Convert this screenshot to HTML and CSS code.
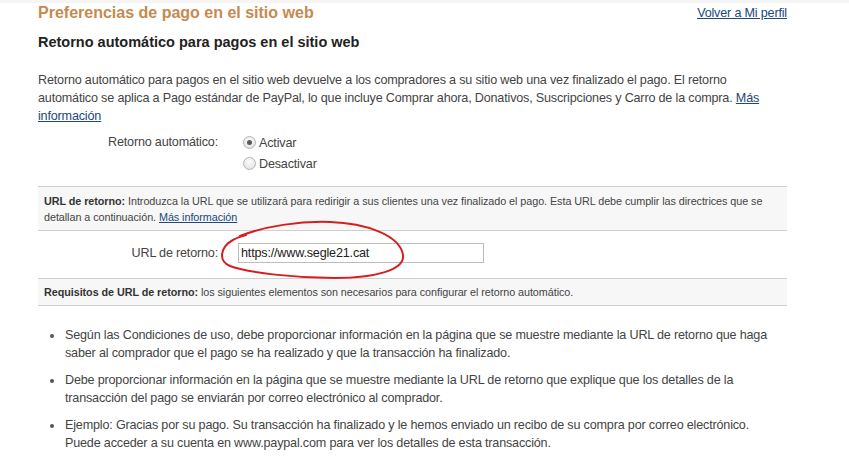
FILE: index.html
```html
<!DOCTYPE html>
<html lang="es">
<head>
<meta charset="utf-8">
<title>Preferencias de pago en el sitio web</title>
<link rel="stylesheet" href="styles.css">
</head>
<body>
<div class="page">
  <header class="top">
    <h1 class="title">Preferencias de pago en el sitio web</h1>
    <a class="link" href="#">Volver a Mi perfil</a>
  </header>
  <h2 class="subtitle">Retorno automático para pagos en el sitio web</h2>
  <p class="intro">Retorno automático para pagos en el sitio web devuelve a los compradores a su sitio web una vez finalizado el pago. El retorno automático se aplica a Pago estándar de PayPal, lo que incluye Comprar ahora, Donativos, Suscripciones y Carro de la compra. <a class="link" href="#">Más información</a></p>

  <div class="row radio-row">
    <div class="label">Retorno automático:</div>
    <div class="opts">
      <div class="opt"><span class="radio on"></span>Activar</div>
      <div class="opt"><span class="radio"></span>Desactivar</div>
    </div>
  </div>

  <div class="note"><b>URL de retorno:</b> Introduzca la URL que se utilizará para redirigir a sus clientes una vez finalizado el pago. Esta URL debe cumplir las directrices que se detallan a continuación. <a class="link" href="#">Más información</a></div>

  <div class="row url-row">
    <div class="label">URL de retorno:</div>
    <div class="input">https://www.segle21.cat</div>
  </div>

  <div class="note note-single"><b>Requisitos de URL de retorno:</b> los siguientes elementos son necesarios para configurar el retorno automático.</div>

  <ul class="reqs">
    <li>Según las Condiciones de uso, debe proporcionar información en la página que se muestre mediante la URL de retorno que haga saber al comprador que el pago se ha realizado y que la transacción ha finalizado.</li>
    <li>Debe proporcionar información en la página que se muestre mediante la URL de retorno que explique que los detalles de la transacción del pago se enviarán por correo electrónico al comprador.</li>
    <li>Ejemplo: Gracias por su pago. Su transacción ha finalizado y le hemos enviado un recibo de su compra por correo electrónico. Puede acceder a su cuenta en www.paypal.com para ver los detalles de esta transacción.</li>
  </ul>

  <svg class="scribble" width="849" height="470" viewBox="0 0 849 470" aria-hidden="true">
    <path d="M 240 236 C 265 226, 300 221, 330 222 C 365 223, 400 235, 403 255 C 405 270, 375 278, 335 278 C 295 278, 250 273, 230 266 C 218 261, 220 247, 233 240 C 236 238, 240 237, 246 235" fill="none" stroke="#d41f1f" stroke-width="2" stroke-linecap="round"/>
  </svg>
</div>
</body>
</html>
```

FILE: styles.css
```css
html, body {
  margin: 0;
  padding: 0;
  background: #fff;
}
body {
  font-family: "Liberation Sans", Arial, sans-serif;
  color: #333;
  font-size: 12.6px;
  letter-spacing: -0.18px;
  border-top: 3px solid #f5f5f5;
}
.page {
  position: relative;
  padding-left: 38px;
  width: 749px;
}
.top {
  display: flex;
  justify-content: space-between;
  align-items: center;
  height: 20px;
}
.title {
  margin: 0;
  font-size: 16px;
  line-height: 20px;
  font-weight: bold;
  letter-spacing: 0;
  color: #c68a4f;
}
.link {
  color: #21487a;
  text-decoration: underline;
}
.subtitle {
  margin: 10px 0 0;
  font-size: 14.5px;
  line-height: 18px;
  font-weight: bold;
  letter-spacing: 0;
  color: #222;
}
.intro {
  margin: 20px 0 0;
  line-height: 18px;
  color: #444;
}
.row {
  display: grid;
  grid-template-columns: 180px 1fr;
}
.label {
  text-align: right;
  color: #444;
}
.radio-row {
  margin-top: 7px;
  column-gap: 25px;
}
.radio-row .label {
  line-height: 21px;
}
.opt {
  display: flex;
  align-items: center;
  height: 21px;
  gap: 3px;
  color: #444;
}
.radio {
  width: 11px;
  height: 11px;
  border-radius: 50%;
  border: 1px solid #b5b5b5;
  background: radial-gradient(circle at 50% 35%, #fdfdfd 0%, #e6e6e6 70%, #d6d6d6 100%);
  position: relative;
}
.radio.on::after {
  content: "";
  position: absolute;
  left: 3px;
  top: 3px;
  width: 5px;
  height: 5px;
  border-radius: 50%;
  background: #5a5a5a;
}
.note {
  margin-top: 12px;
  border-top: 1px solid #cfcfcf;
  border-bottom: 1px solid #cfcfcf;
  background: #f7f7f7;
  font-size: 10.8px;
  letter-spacing: -0.06px;
  line-height: 16px;
  padding: 6px 10px 5px 6px;
  color: #444;
}
.note b {
  color: #333;
}
.url-row {
  column-gap: 20px;
  align-items: center;
  padding: 12px 0 15px;
}
.input {
  width: 242px;
  height: 18px;
  line-height: 18px;
  border: 1px solid #bdbdbd;
  padding-left: 2px;
  color: #222;
  background: #fff;
}
.note-single {
  margin-top: 0;
  padding-top: 5px;
}
.reqs {
  margin: 20px 0 0;
  padding-left: 12px;
  list-style: none;
  line-height: 18px;
  color: #444;
}
.reqs li {
  display: flex;
  margin-bottom: 9px;
}
.reqs li::before {
  content: "";
  flex: none;
  width: 4px;
  height: 4px;
  border-radius: 50%;
  background: #555;
  margin: 8px 11px 0 0;
}
.scribble {
  position: absolute;
  left: 0;
  top: -3px;
  pointer-events: none;
}
```
